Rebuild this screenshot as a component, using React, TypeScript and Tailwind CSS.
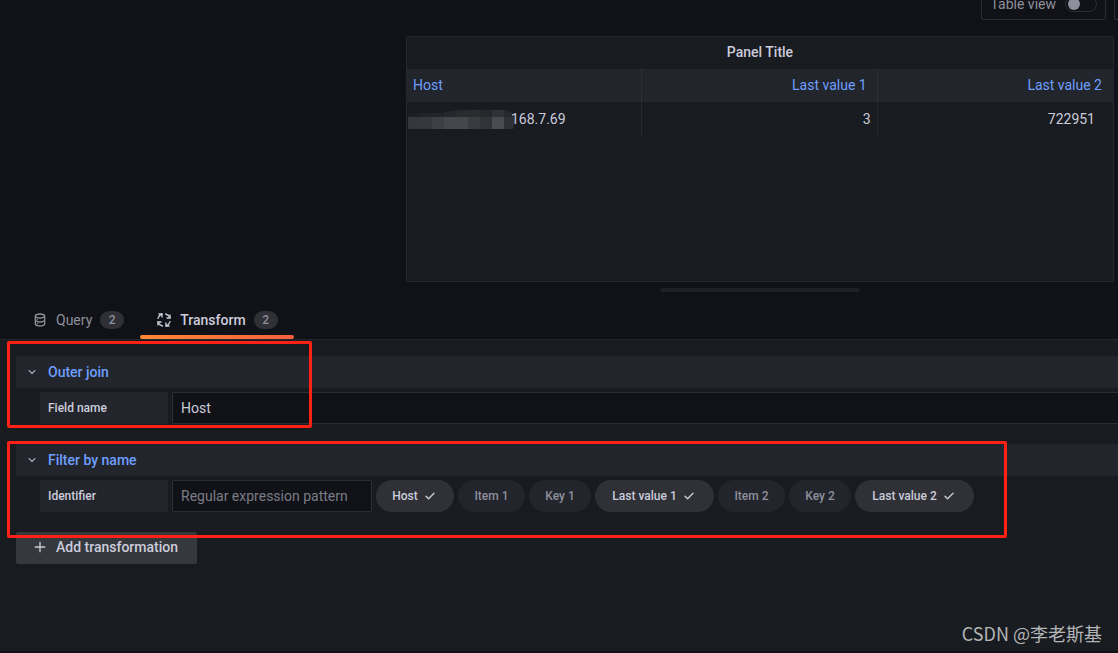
import { useState } from "react";
import clsx from "clsx";

const icons = {
    database:
        "M8,16.5a1,1,0,1,0,1,1A1,1,0,0,0,8,16.5ZM12,2C8,2,4,3.37,4,6V18c0,2.63,4,4,8,4s8-1.37,8-4V6C20,3.37,16,2,12,2Zm6,16c0,.71-2.28,2-6,2s-6-1.29-6-2V14.73A13.16,13.16,0,0,0,12,16a13.16,13.16,0,0,0,6-1.27Zm0-6c0,.71-2.28,2-6,2s-6-1.29-6-2V8.73A13.16,13.16,0,0,0,12,10a13.16,13.16,0,0,0,6-1.27ZM12,8C8.28,8,6,6.71,6,6s2.28-2,6-2,6,1.29,6,2S15.72,8,12,8ZM8,10.5a1,1,0,1,0,1,1A1,1,0,0,0,8,10.5Z",
    angleDown:
        "M17,9.17a1,1,0,0,0-1.41,0L12,12.71,8.46,9.17a1,1,0,0,0-1.41,0,1,1,0,0,0,0,1.42l4.24,4.24a1,1,0,0,0,1.42,0L17,10.59A1,1,0,0,0,17,9.17Z",
    check:
        "M18.71,7.21a1,1,0,0,0-1.42,0L9.84,14.67,6.71,11.53A1,1,0,1,0,5.29,13l3.84,3.84a1,1,0,0,0,1.42,0l8.16-8.16A1,1,0,0,0,18.71,7.21Z",
    plus:
        "M19,11H13V5a1,1,0,0,0-2,0v6H5a1,1,0,0,0,0,2h6v6a1,1,0,0,0,2,0V13h6a1,1,0,0,0,0-2Z",
};

// Fields offered by the name filter
const fields = [
    { name: "Host", width: "min-w-[78px]" },
    { name: "Item 1", width: "min-w-[67px]" },
    { name: "Key 1", width: "min-w-[62px]" },
    { name: "Last value 1", width: "min-w-[119px]" },
    { name: "Item 2", width: "min-w-[67px]" },
    { name: "Key 2", width: "min-w-[62px]" },
    { name: "Last value 2", width: "min-w-[119px]" },
];

function Icon({ name, className }: { name: keyof typeof icons; className?: string }) {
    return (
        <svg viewBox="0 0 24 24" fill="currentColor" aria-hidden="true" className={clsx("size-4 shrink-0", className)}>
            <path d={icons[name]} />
        </svg>
    );
}

function ProcessIcon() {
    return (
        <svg
            viewBox="0 0 24 24"
            fill="none"
            stroke="currentColor"
            strokeWidth="2"
            strokeLinecap="round"
            strokeLinejoin="round"
            aria-hidden="true"
            className="size-4 shrink-0"
        >
            {[0, 90, 180, 270].map((angle) => (
                <g key={angle} transform={`rotate(${angle} 12 12)`}>
                    <path d="M4.5 3H9v4.5" />
                    <path d="M9 3A9.500 9.500 0 0 0 3 9.500" />
                </g>
            ))}
        </svg>
    );
}

// Pixelated patch hiding the first octets of the address
function Mosaic() {
    const top = ["#1d2024", "#212428", "#222529", "#25282c", "#292b2f", "#2b2c30", "#26282c", "#303236", "#26282c"];
    const bottom = ["#35373c", "#36383d", "#3d3f44", "#44474c", "#44474c", "#3a3b40", "#323338", "#484b51", "#2f3136"];
    return (
        <svg width="107" height="19" viewBox="0 0 107 19" aria-hidden="true" className="shrink-0">
            <clipPath id="patch">
                <path d="M0 5Q2 3 9 3H34Q44 0 60 0H96Q107 1 107 12L105 19H0Z" />
            </clipPath>
            <g clipPath="url(#patch)">
                {top.map((fill, i) => (
                    <rect key={i} x={i * 12} y="0" width="12" height="7" fill={fill} />
                ))}
                {bottom.map((fill, i) => (
                    <rect key={i} x={i * 12} y="7" width="12" height="12" fill={fill} />
                ))}
            </g>
        </svg>
    );
}

function Tab({ label, count, active, icon, onClick }: any) {
    return (
        <button
            type="button"
            role="tab"
            aria-selected={active}
            onClick={onClick}
            className={clsx("flex flex-col", active ? "font-medium text-[#ccccdc]" : "text-[#8e8f9b]")}
        >
            <span className="flex h-[35px] items-center gap-2 px-4 pt-1">
                {icon}
                <span>{label}</span>
                <span className="flex h-[18px] w-6 items-center justify-center rounded-full bg-[#2f3136] text-xs font-medium text-[#8e8f9b]">
                    {count}
                </span>
            </span>
            <span className={clsx("h-1 w-full rounded-xs", active && "bg-linear-to-r from-[#ff8833] to-[#f55f3e]")} />
        </button>
    );
}

function CardHeader({ title }: { title: string }) {
    return (
        <h2 className="flex h-8 items-center rounded-l-xs bg-[#22252b]">
            <button type="button" className="flex items-center gap-2 pl-2 font-medium text-[#6e9fff]">
                <Icon name="angleDown" className="text-[#9fa0ad]" />
                {title}
            </button>
        </h2>
    );
}

const labelClass = "flex h-8 w-32 shrink-0 items-center rounded-xs bg-[#22252b] px-2 text-xs font-medium";
const inputClass = "h-8 border border-[#2d2e34] bg-[#111217] px-2 placeholder:text-[#7b7c87] outline-none";

export default function App() {
    const [tab, setTab] = useState("Transform");
    const [tableView, setTableView] = useState(false);
    const [fieldName, setFieldName] = useState("Host");
    const [selected, setSelected] = useState(["Host", "Last value 1", "Last value 2"]);

    const toggle = (name: string) =>
        setSelected(selected.includes(name) ? selected.filter((n) => n !== name) : [...selected, name]);

    return (
        <div className="relative flex min-h-screen flex-col overflow-hidden bg-[#111217] pb-0.5 font-[Roboto,'Noto_Sans_CJK_SC',sans-serif] text-sm text-[#ccccdc]">
            {/* Toolbar */}
            <div className="flex h-5 items-end justify-end gap-2 overflow-hidden">
                <label className="flex h-8 shrink-0 items-center gap-[9px] rounded-xs border border-[#2d2e34] pr-2 pl-[9px] text-[#8e8f9b]">
                    Table view
                    <input
                        type="checkbox"
                        checked={tableView}
                        onChange={(e) => setTableView(e.target.checked)}
                        className="peer sr-only"
                    />
                    <span className="flex h-4 w-8 items-center rounded-full border border-[#2d2e34] px-0.5 peer-checked:justify-end">
                        <span className="size-3 rounded-full bg-[#8e8f9b]" />
                    </span>
                </label>
                <span className="h-8 w-1 rounded-l-xs border border-r-0 border-[#2d2e34]" />
            </div>

            {/* Panel */}
            <section className="mt-4 mr-1 ml-[406px] h-[246px] rounded-xs border border-[#25272c] bg-[#181b1f]">
                <h1 className="flex h-8 items-center justify-center pb-0.5 font-medium">Panel Title</h1>
                <table className="w-full table-fixed border-separate border-spacing-0">
                    <thead>
                        <tr className="h-[33px] bg-[#22252b] text-[#6e9fff]">
                            <th className="border-r border-[#2d3036] px-1.5 pb-0.5 text-left font-normal">Host</th>
                            <th className="border-r border-[#2d3036] px-2.5 pb-0.5 text-right font-normal">Last value 1</th>
                            <th className="px-[11px] pb-0.5 text-right font-normal">Last value 2</th>
                        </tr>
                    </thead>
                    <tbody>
                        <tr className="h-[35px]">
                            <td className="border-r border-[#25272c] pl-px">
                                <div className="flex items-center">
                                    <Mosaic />
                                    <span className="-ml-1 pb-0.5">168.7.69</span>
                                </div>
                            </td>
                            <td className="border-r border-[#25272c] px-1.5 pb-0.5 text-right">3</td>
                            <td className="px-[18px] pb-0.5 text-right">722951</td>
                        </tr>
                    </tbody>
                </table>
            </section>
            <div className="mt-1.5 mr-1 ml-[406px] flex justify-center">
                <div className="h-1 w-[200px] rounded-full bg-[#1f2024]" />
            </div>

            {/* Tabs */}
            <div role="tablist" className="mt-2 flex h-10 border-b border-[#25272c] px-4">
                <Tab
                    label="Query"
                    count={2}
                    icon={<Icon name="database" />}
                    active={tab === "Query"}
                    onClick={() => setTab("Query")}
                />
                <Tab
                    label="Transform"
                    count={2}
                    icon={<ProcessIcon />}
                    active={tab === "Transform"}
                    onClick={() => setTab("Transform")}
                />
            </div>

            {/* Transformations */}
            <main className="flex flex-1 flex-col gap-5 bg-[#181b1f] pt-4 pl-4">
                <section className="relative">
                    <CardHeader title="Outer join" />
                    <div className="mt-1 flex gap-1 pl-6">
                        <label htmlFor="field-name" className={labelClass}>
                            Field name
                        </label>
                        <input
                            id="field-name"
                            value={fieldName}
                            onChange={(e) => setFieldName(e.target.value)}
                            className={clsx(inputClass, "min-w-0 flex-1 rounded-l-xs border-r-0")}
                        />
                    </div>
                    <div className="pointer-events-none absolute -top-[15px] -left-[9px] h-[87px] w-[305px] rounded-xs border-3 border-[#ff2116]" />
                </section>

                <section className="relative">
                    <CardHeader title="Filter by name" />
                    <div className="mt-1 flex flex-wrap gap-1 pl-6">
                        <label htmlFor="identifier" className={labelClass}>
                            Identifier
                        </label>
                        <input
                            id="identifier"
                            placeholder="Regular expression pattern"
                            className={clsx(inputClass, "w-[200px] rounded-xs")}
                        />
                        {fields.map(({ name, width }) => {
                            const on = selected.includes(name);
                            return (
                                <button
                                    key={name}
                                    type="button"
                                    aria-pressed={on}
                                    onClick={() => toggle(name)}
                                    className={clsx(
                                        "flex h-8 items-center justify-center gap-1 rounded-full px-4 text-xs font-medium",
                                        width,
                                        on ? "bg-[#2f3136]" : "bg-[#22252b] text-[#8e8f9b]"
                                    )}
                                >
                                    {name}
                                    {on && <Icon name="check" />}
                                </button>
                            );
                        })}
                    </div>
                    <div className="pointer-events-none absolute -top-[3px] -left-[9px] z-10 h-[97px] w-[1000px] rounded-xs border-3 border-[#ff2116]" />
                </section>

                <button
                    type="button"
                    className="flex h-8 min-w-[181px] items-center gap-2 self-start rounded-xs bg-[#35383c] px-4 pb-0.5 font-medium"
                >
                    <Icon name="plus" />
                    Add transformation
                </button>
            </main>

            <p className="absolute right-4 bottom-2 font-['Noto_Sans_CJK_SC',sans-serif] text-lg leading-6 text-[#b4b5b7]">
                CSDN @李老斯基
            </p>
        </div>
    );
}
